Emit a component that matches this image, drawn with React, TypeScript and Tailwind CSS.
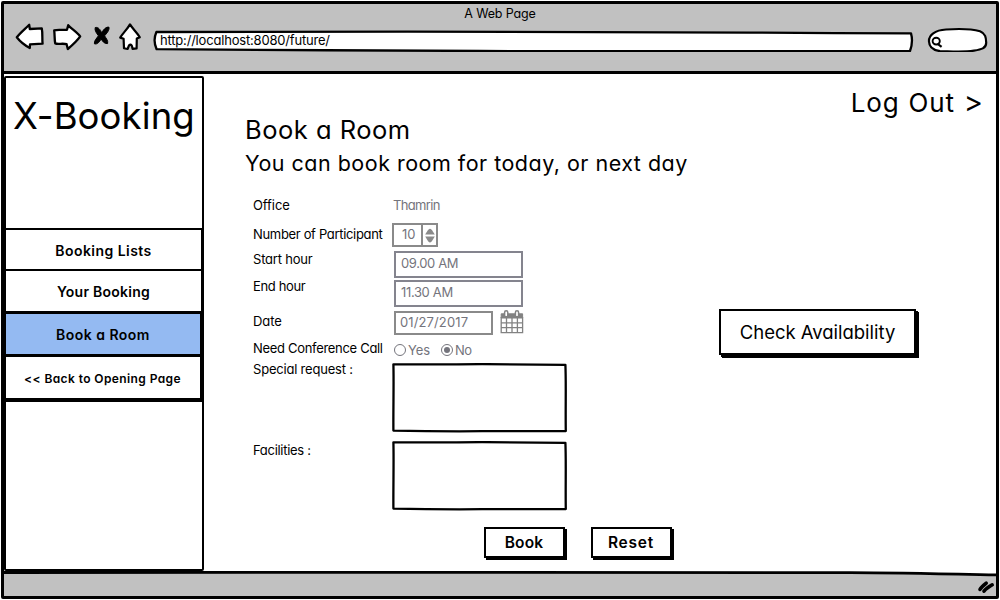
import type { ReactNode } from "react";

function BackIcon() {
  return (
    <svg className="h-[30px] w-[31px] shrink-0" viewBox="14 22 31 30" fill="#fff" stroke="#000" strokeWidth="2.3" strokeLinejoin="round">
      <path d="M16.8 37.3 C20 33 25 29 29.2 24.8 L29.8 29 L41.8 28.4 C42.8 33 42 39 42.6 43.6 L30 44.4 L29.8 48 C25 45.5 20 41.5 16.8 37.3 Z" />
    </svg>
  );
}

function ForwardIcon() {
  return (
    <svg className="ml-1.5 h-[30px] w-8 shrink-0" viewBox="51 22 32 30" fill="#fff" stroke="#000" strokeWidth="2.3" strokeLinejoin="round">
      <path d="M54.2 30.4 C58 29 63 30.4 67 29.8 L68.2 25.2 C71 28.5 77 32 80.2 36.4 C77 41 72 45.5 67.8 49 L66.6 44.2 C63 43 58 44.6 55.2 43.4 C54.4 39 54.8 35 54.2 30.4 Z" />
    </svg>
  );
}

function StopIcon() {
  return (
    <svg className="ml-[9px] h-[30px] w-5 shrink-0" viewBox="92 22 20 30" fill="#000" stroke="#000" strokeLinejoin="round" strokeWidth="1">
      <path d="M95.2 27.6 C98 26.6 100.4 29.6 101.8 32.8 C103.4 29.6 106 26.6 109 27.2 C109.6 30.4 106.6 33.4 104.6 35.8 C106 38.4 108.4 40.6 107.6 43.6 C104.4 44 102.6 41.4 101.2 39 C99.6 41.4 97.6 44.8 94.4 43.8 C93.8 41 96.8 38.2 98.4 35.8 C96.6 33.2 94.4 30.6 95.2 27.6 Z" />
    </svg>
  );
}

function HomeIcon() {
  return (
    <svg className="ml-[5px] h-[30px] w-[26px] shrink-0" viewBox="117 22 26 30" fill="#fff" stroke="#000" strokeWidth="2.2" strokeLinejoin="round">
      <path d="M130 24.4 C132 28 137 32.5 139.8 37.2 L136.8 38.6 L136.6 48.4 L132.6 48.8 C132 47 132.2 44.8 130.4 44.6 C128.4 44.6 128.6 47.4 127.6 49 L124 48.2 L123.6 38.8 L120.2 37.6 C123 33 127.5 29 130 24.4 Z" />
    </svg>
  );
}

function AddressBar() {
  return (
    <div className="relative ml-[9px] h-[30px] w-[763px] pt-2 pl-2">
      <svg className="absolute inset-0 h-[30px] w-[763px]" viewBox="152 22 763 30" fill="#fff" stroke="#000" strokeWidth="2.3" strokeLinejoin="round">
        <path d="M156.4 32 C340 31.4 600 31.6 750 32.6 C800 33.2 860 33 911 33.4 C912.6 39 911.8 46 910 51 C760 51.8 640 50.8 480 51 C360 51 280 49.4 156.6 49.2 C154.2 44 154.2 37 156.4 32 Z" />
      </svg>
      <div className="relative text-[13px] leading-5 tracking-[-0.19px]">http://localhost:8080/future/</div>
    </div>
  );
}

function SearchBox() {
  return (
    <svg className="ml-[11px] h-[30px] w-[63px] shrink-0" viewBox="926 22.5 63 30" fill="#fff" stroke="#000" strokeWidth="2.2">
      <path d="M929 42 C928.6 35.5 935 30.6 946 30 C957 29.2 971 29.2 980 31.8 C985.6 34 986 38 986.2 43 C986.4 49 981 50 974 51.2 C962 53 950 51.8 940 51.6 C933 50.8 929.2 47 929 42 Z" />
      <ellipse cx="936.2" cy="41.6" rx="3.6" ry="3.4" strokeWidth="1.9" />
      <path d="M937.6 44.4 L941.6 47.4" strokeWidth="2.2" fill="none" />
    </svg>
  );
}

function CalendarIcon() {
  return (
    <svg className="ml-[7px] h-6 w-6" viewBox="0 0 24 24" fill="none" stroke="#828282">
      <path d="M1.2 3.8 H22.6 V8 H1.2 Z" fill="#828282" />
      <path d="M1.2 7 V22.6 H22.6 V7 M6.5 8 V23 M12 8 V23 M17.4 8 V23 M1 12.8 H23 M1 17.6 H23" strokeWidth="1.3" />
      <rect x="4.6" y="0.8" width="3.2" height="6" rx="1.6" fill="#fff" strokeWidth="1.5" />
      <rect x="15.4" y="0.8" width="3.2" height="6" rx="1.6" fill="#fff" strokeWidth="1.5" />
    </svg>
  );
}

function Radio({ checked = false }: { checked?: boolean }) {
  return (
    <span className="flex size-3 items-center justify-center rounded-full border border-[#74747c]">
      {checked && <span className="size-1.5 rounded-full bg-[#74747c]" />}
    </span>
  );
}

function TextArea({ offset }: { offset: string }) {
  return (
    <div className={`relative -ml-px h-[70px] w-[176px] ${offset}`}>
      <svg className="absolute inset-0 h-[70px] w-[176px]" viewBox="0 0 176 70" fill="#fff" stroke="#000" strokeWidth="2.3" strokeLinejoin="round">
        <path d="M1.4 1.4 C20 1.2 50 1.6 90 1.1 C120 1.6 150 1.4 173.4 1.8 C174.2 20 173.4 46 173.8 68 C150 68.4 130 67.8 90 68.2 C60 68.4 30 68.2 1.4 67.6 C1.2 46 1.9 20 1.4 1.4 Z" />
      </svg>
    </div>
  );
}

function Field({ label, row, labelClass, children }: { label: string; row: string; labelClass: string; children: ReactNode }) {
  return (
    <div className={`flex items-start pl-[8px] ${row}`}>
      <div className={`w-[140px] shrink-0 text-[13px] leading-5 whitespace-nowrap ${labelClass}`}>{label}</div>
      {children}
    </div>
  );
}

const hourBox = "h-[27px] w-[129px] border-2 border-[#84848e] pl-[5px] text-[13px] leading-5 text-[#74747c]";

function Sidebar() {
  return (
    <aside className="mt-[2px] flex h-[495px] w-[200px] shrink-0 flex-col rounded-[2px] border-2 border-black">
      <h1 className="h-[150px] pt-[14px] pl-[7px] text-[36.5px] leading-[48px] tracking-[0.1px] whitespace-nowrap">X-Booking</h1>
      <nav className="flex flex-col text-center text-[14px] font-semibold">
        <a className="h-[41px] border-t-2 border-r border-black pt-[11px] leading-5 tracking-[0.45px]">Booking Lists</a>
        <a className="h-[42px] border-t-2 border-r border-black pt-[11px] leading-5 tracking-[0.25px]">Your Booking</a>
        <a className="h-[43px] border-t-3 border-r-2 border-black bg-[#94baf2] pt-[11px] leading-5 tracking-[0.48px]">Book a Room</a>
        <a className="h-12 border-t-3 border-r-2 border-b-4 border-black pt-3 pr-px text-[12px] leading-5 tracking-[0.4px]">
          &lt;&lt; Back to Opening Page
        </a>
      </nav>
    </aside>
  );
}

function BookingForm() {
  return (
    <form className="ml-[41px] w-[475px] pt-[39px]">
      <h2 className="text-[25.5px] leading-[34px] tracking-[0.5px]">Book a Room</h2>
      <p className="mt-px text-[21.5px] leading-[30px] tracking-[0.49px] whitespace-nowrap">You can book room for today, or next day</p>
      <div className="mt-[17px] flex flex-col">
        <Field label="Office" row="h-7" labelClass="tracking-[-0.07px]">
          <span className="text-[13px] leading-5 tracking-[-0.66px] text-[#74747c]">Thamrin</span>
        </Field>
        <Field label="Number of Participant" row="h-[26px]" labelClass="pt-px tracking-[-0.33px]">
          <div className="-ml-px flex h-6 w-[46px] border-[2.5px] border-[#8a8a8a]">
            <span className="w-[27px] pl-2 text-[13px] leading-[19px] text-[#74747c]">10</span>
            <span className="flex flex-1 items-center justify-center border-l-2 border-[#8a8a8a]">
              <svg className="h-[15px] w-3 shrink-0" viewBox="0 0 12 15" fill="#8a8a8a">
                <path d="M1.2 6.6 C3 4 4 1 6 0.8 C8 1 9 4 10.8 6.6 Z" />
                <path d="M1.2 8.6 H10.8 C9 11 8 14.4 6 14.6 C4 14.4 3 11 1.2 8.6 Z" />
              </svg>
            </span>
          </div>
        </Field>
        <Field label="Start hour" row="h-[30px] pt-px" labelClass="-mt-px tracking-[-0.2px]">
          <div className={`mt-px ml-px tracking-[-0.37px] ${hourBox}`}>09.00 AM</div>
        </Field>
        <Field label="End hour" row="h-[31px]" labelClass="-mt-[3px] tracking-[-0.36px]">
          <div className={`mt-px ml-px tracking-[-0.35px] ${hourBox}`}>11.30 AM</div>
        </Field>
        <Field label="Date" row="h-7" labelClass="pt-px tracking-[-0.1px]">
          <div className="mt-px ml-px h-6 w-[99px] border-2 border-[#8a8a8a] pl-1 text-[13px] leading-[19px] tracking-[0.12px] text-[#74747c]">01/27/2017</div>
          <CalendarIcon />
        </Field>
        <Field label="Need Conference Call" row="h-[21px]" labelClass="tracking-[-0.31px]">
          <div className="flex h-[23px] items-center pl-px text-[13px] leading-5 text-[#74747c]">
            <Radio />
            <span className="ml-[2px] w-[33px] tracking-[-0.14px]">Yes</span>
            <Radio checked />
            <span className="ml-0.5 tracking-[-0.59px]">No</span>
          </div>
        </Field>
        <Field label="Special request :" row="h-[81px]" labelClass="tracking-[-0.2px]">
          <TextArea offset="mt-1" />
        </Field>
        <Field label="Facilities :" row="h-[87px]" labelClass="tracking-[-0.3px]">
          <TextArea offset="mt-px" />
        </Field>
      </div>
      <div className="flex gap-[26px] pl-[239px] text-center text-[15.5px] leading-[27px] font-semibold">
        <div className="h-[31px] w-[81px] border-2 border-black bg-white pr-px tracking-[0.2px] shadow-[2px_2px_0_#000]">Book</div>
        <div className="h-[31px] w-[81px] border-2 border-black bg-white pr-px tracking-[0.8px] shadow-[2px_2px_0_#000]">Reset</div>
      </div>
    </form>
  );
}

export default function App() {
  return (
    <div className="h-[600px] w-[1000px] overflow-hidden bg-white p-px font-['Inter','Liberation_Sans',sans-serif] text-black [font-feature-settings:'cv11']">
      <div className="flex h-[598px] flex-col rounded-[2px] border-3 border-black">
        <header className="h-[70px] shrink-0 border-b-3 border-black bg-[#c1c1c1]">
          <div className="h-[18px] text-center text-[12.5px] leading-5 tracking-[-0.15px]">A Web Page</div>
          <div className="flex pl-[10px]">
            <BackIcon />
            <ForwardIcon />
            <StopIcon />
            <HomeIcon />
            <AddressBar />
            <SearchBox />
          </div>
        </header>
        <main className="flex h-[497px] shrink-0">
          <Sidebar />
          <BookingForm />
          <div className="flex flex-1 flex-col items-end pt-[11px]">
            <a className="pr-[13px] text-[26px] leading-9 tracking-[0.8px] whitespace-nowrap [word-spacing:1px]">
              Log Out <span className="text-[29px] leading-none tracking-normal">&gt;</span>
            </a>
            <div className="mt-[188px] mr-20 h-[46px] w-[197px] border-2 border-black bg-white text-center text-[18.5px] leading-[42px] tracking-[-0.02px] shadow-[2px_2px_0_#000,3px_3px_0_#000]">
              Check Availability
            </div>
          </div>
        </main>
        <footer className="h-[25px] shrink-0 bg-white">
          <svg className="h-[25px] w-[992px]" viewBox="4 571 992 25">
            <path d="M0 572.5 C300 572.2 700 571.8 850 572.6 C900 572.8 960 574.2 1000 575 V600 H0 Z" fill="#c1c1c1" stroke="#000" strokeWidth="2.8" />
            <path d="M980 589.4 C981.5 587 984 585 986.2 583.2 M984 591.2 C986 588.6 989.5 586.4 992.2 584.8" stroke="#000" strokeWidth="3.6" strokeLinecap="round" fill="none" />
          </svg>
        </footer>
      </div>
    </div>
  );
}
